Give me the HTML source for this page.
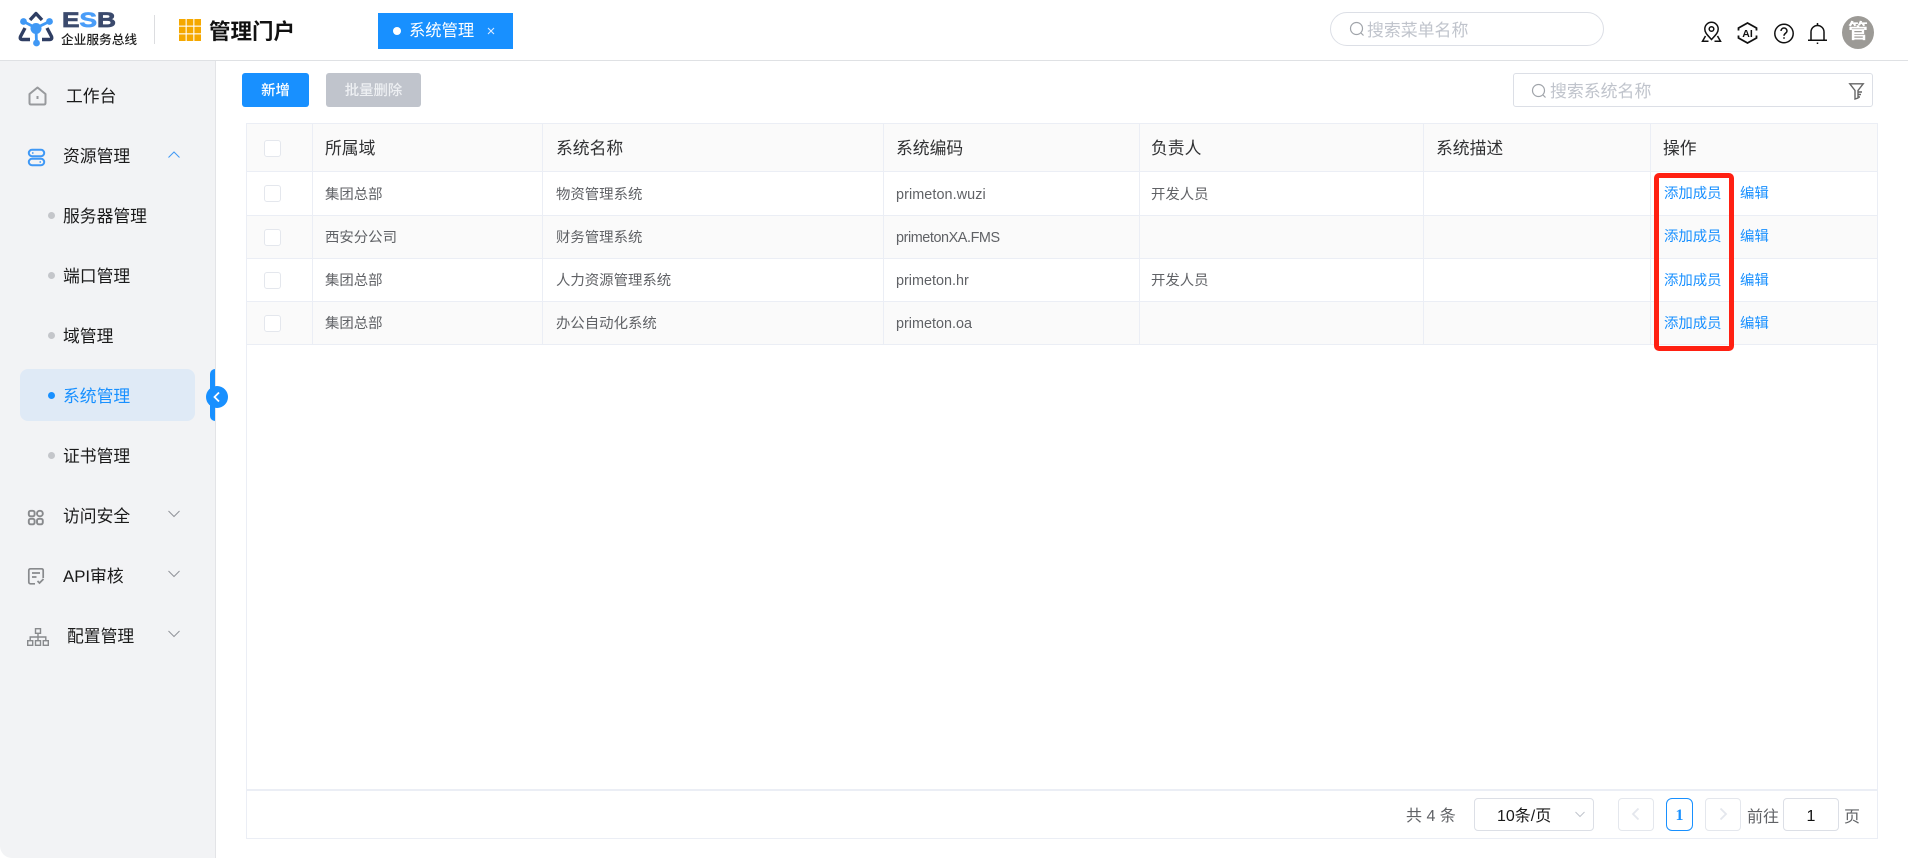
<!DOCTYPE html>
<html lang="zh-CN">
<head>
<meta charset="utf-8">
<title>系统管理</title>
<style>
*{box-sizing:border-box;margin:0;padding:0}
html,body{width:1908px;height:858px;overflow:hidden;background:#fff}
body{font-family:"Liberation Sans","Noto Sans CJK SC",sans-serif;position:relative}
#app{position:absolute;left:0;top:0;width:1908px;height:858px;border-radius:12px;overflow:hidden;background:#fff}
.a{position:absolute}
.t{position:absolute;white-space:nowrap;line-height:24px;height:24px;margin-top:1px}
.side{font-size:16.8px;color:#1a1a1a}
.h{font-size:16.8px;color:#303133}
.c{font-size:14.4px;color:#606266}
.l{font-size:14.4px;color:#1890ff}
.hl{position:absolute;height:1px;background:#ebeef5;left:246px;width:1632px}
.vl{position:absolute;width:1px;background:#ebeef5;top:123px;height:221px}
.cb{position:absolute;left:264px;width:17px;height:17px;border:1px solid #e4e7ed;border-radius:3px;background:#fff}
.dot{position:absolute;left:48px;width:7px;height:7px;border-radius:50%;background:#c4c6ca}
.pg{position:absolute;top:798px;height:33px;border:1px solid #e4e7ed;border-radius:4px;background:#fff}
svg{position:absolute;overflow:visible}
</style>
</head>
<body>
<div id="app">
  <!-- header -->
  <div class="a" style="left:0;top:60px;width:1908px;height:1px;background:#dfe1e4"></div>
  <svg style="left:0;top:0" width="160" height="60" viewBox="0 0 160 60">
    <g fill="none" stroke="#2f3e63" stroke-width="3.400" stroke-linejoin="round">
      <path d="M30 20L36 13.500L42 20"/>
      <path d="M25 28L20.500 36.500Q19.500 39.500 22.500 39.500H30"/>
      <path d="M47 28L51.500 36.500Q52.500 39.500 49.500 39.500H42"/>
    </g>
    <g stroke="#3f98f5" stroke-width="2.800">
      <line x1="23.500" y1="21.500" x2="36" y2="28"/>
      <line x1="49.500" y1="21.500" x2="36" y2="28"/>
      <line x1="36" y1="28" x2="36.500" y2="43"/>
    </g>
    <g fill="#3f98f5">
      <circle cx="36" cy="28.500" r="5.500"/>
      <circle cx="23.500" cy="21.500" r="3.400"/>
      <circle cx="49.500" cy="21.500" r="3.400"/>
      <circle cx="36.500" cy="43" r="3.400"/>
    </g>
    <text x="62" y="27" font-family="Liberation Sans" font-weight="700" font-size="21" textLength="54" lengthAdjust="spacingAndGlyphs" fill="#3b4a6d" stroke="#3b4a6d" stroke-width=".7">E<tspan fill="#4a9df8" stroke="#4a9df8">S</tspan>B</text>
  </svg>
  <div class="t" style="left:61px;top:27px;font-size:12.700px;font-weight:500;color:#222">企业服务总线</div>
  <div class="a" style="left:154px;top:15px;width:1px;height:29px;background:#dcdde0"></div>
  <svg style="left:179px;top:19px" width="22" height="22" viewBox="0 0 22 22">
    <g fill="#f5a800">
      <rect x="0" y="0" width="6.600" height="6.600"/><rect x="7.700" y="0" width="6.600" height="6.600"/><rect x="15.400" y="0" width="6.600" height="6.600"/>
      <rect x="0" y="7.700" width="6.600" height="6.600"/><rect x="7.700" y="7.700" width="6.600" height="6.600"/><rect x="15.400" y="7.700" width="6.600" height="6.600"/>
      <rect x="0" y="15.400" width="6.600" height="6.600"/><rect x="7.700" y="15.400" width="6.600" height="6.600"/><rect x="15.400" y="15.400" width="6.600" height="6.600"/>
    </g>
  </svg>
  <div class="t" style="left:209px;top:19px;font-size:21.500px;font-weight:700;color:#111">管理门户</div>
  <div class="a" style="left:378px;top:13px;width:135px;height:36px;background:#1890ff"></div>
  <div class="a" style="left:393px;top:27px;width:8px;height:8px;border-radius:50%;background:#fff"></div>
  <div class="t" style="left:409px;top:18px;font-size:16.300px;color:#fff">系统管理</div>
  <svg style="left:487px;top:27px" width="8" height="8" viewBox="0 0 8 8"><path d="M1 1L7 7M7 1L1 7" stroke="#dcebff" stroke-width="1.100"/></svg>

  <div class="a" style="left:1330px;top:12px;width:274px;height:34px;border:1px solid #dcdfe6;border-radius:17px"></div>
  <svg style="left:1349px;top:21px" width="16" height="16" viewBox="0 0 16 16" fill="none" stroke="#a0a4aa" stroke-width="1.200"><circle cx="7.500" cy="7.500" r="6"/><path d="M12 12L14.500 14.500"/></svg>
  <div class="t" style="left:1367px;top:18px;font-size:16.900px;color:#c0c4cc">搜索菜单名称</div>

  <!-- right icons -->
  <svg style="left:1700px;top:20px" width="130" height="28" viewBox="1700 20 130 28" fill="none" stroke="#111" stroke-width="1.500">
    <path d="M1711.500 39.500C1708 35.500 1704.800 33 1704.800 29A6.700 6.700 0 0 1 1718.200 29C1718.200 33 1715 35.500 1711.500 39.500Z"/>
    <circle cx="1711.500" cy="29" r="2.300"/>
    <path d="M1705.500 36L1702.500 41.300H1708.500M1717.500 36L1720.500 41.300H1714.500"/>
    <path d="M1738.500 30.500V28L1747.500 23L1756.500 28V30.500M1738.500 35.500V38L1747.500 43L1756.500 38V35.500" stroke-width="1.800"/>
    <circle cx="1784" cy="33.500" r="9.200"/>
    <path d="M1781 31A3 3 0 0 1 1787 31C1787 33.200 1784 33.300 1784 35.700"/>
    <path d="M1784 37.300V38.800"/>
    <path d="M1811 40V32A6.500 6.500 0 0 1 1824 32V40"/>
    <path d="M1808 40.300H1827"/>
    <path d="M1817.500 23V25.500M1817.500 42.500V44"/>
    <text x="1747.500" y="37" font-family="Liberation Sans" font-weight="700" font-size="10.500" fill="#111" stroke="none" text-anchor="middle">AI</text>
  </svg>
  <div class="a" style="left:1842px;top:16px;width:32px;height:33px;border-radius:50%;background:#9c9a96;overflow:hidden;color:#fff;font-size:20px;font-weight:700;line-height:33px;text-align:center">管</div>

  <!-- sidebar -->
  <div class="a" style="left:0;top:61px;width:215px;height:797px;background:#f2f3f5"></div>
  <div class="a" style="left:215px;top:61px;width:1px;height:797px;background:#e3e4e7"></div>
  <div class="a" style="left:20px;top:369px;width:175px;height:52px;border-radius:8px;background:#dfeaf6"></div>
  <div class="a" style="left:210px;top:369px;width:5px;height:52px;border-radius:5px 0 0 5px;background:#1890ff"></div>
  <div class="a" style="left:206px;top:386px;width:22px;height:22px;border-radius:50%;background:#1890ff"></div>
  <svg style="left:206px;top:386px" width="22" height="22" viewBox="0 0 22 22" fill="none"><path d="M13 6.500L8.500 11L13 15.500" stroke="#fff" stroke-width="1.800"/></svg>

  <svg style="left:28px;top:86px" width="20" height="20" viewBox="0 0 20 20" fill="none" stroke="#989a9d" stroke-width="2" stroke-linejoin="round">
    <path d="M1.500 8L9.500 1.500L17.500 8V17Q17.500 18.500 16 18.500H3Q1.500 18.500 1.500 17Z"/><path d="M9.500 10V13"/>
  </svg>
  <svg style="left:28px;top:149px" width="17" height="17" viewBox="0 0 17 17" fill="none" stroke="#3f98f5" stroke-width="2">
    <rect x=".8" y=".8" width="15.400" height="6.400" rx="3.200"/><rect x=".8" y="9.800" width="15.400" height="6.400" rx="3.200"/>
    <path d="M4 4H5.500M11.500 13H13" stroke-width="1.400"/>
  </svg>
  <svg style="left:28px;top:510px" width="16" height="15" viewBox="0 0 16 15" fill="none" stroke="#888a8d" stroke-width="1.900">
    <rect x=".8" y=".8" width="5.800" height="5.500" rx="1.800"/><rect x="9" y=".8" width="5.800" height="5.500" rx="2.700"/>
    <rect x=".8" y="8.800" width="5.800" height="5.500" rx="1.800"/><rect x="9" y="8.800" width="5.800" height="5.500" rx="1.800"/>
  </svg>
  <svg style="left:28px;top:568px" width="17" height="17" viewBox="0 0 17 17" fill="none" stroke="#888a8d" stroke-width="1.700">
    <path d="M7 15.800H2.500Q.8 15.800 .8 14V2.500Q.8 .8 2.500 .8H13.500Q15.200 .8 15.200 2.500V10"/><path d="M4 5H12M4 9H8.500M9.500 13L11.500 15L15.500 11"/>
  </svg>
  <svg style="left:27px;top:628px" width="22" height="18" viewBox="0 0 22 18" fill="none" stroke="#888a8d" stroke-width="1.400">
    <rect x="8.500" y=".7" width="5" height="4.600"/><rect x=".7" y="12.700" width="5" height="4.600"/><rect x="8.500" y="12.700" width="5" height="4.600"/><rect x="16.300" y="12.700" width="5" height="4.600"/>
    <path d="M11 5.300V12.700M3.200 12.700V9H18.800V12.700"/>
  </svg>

  <div class="t side" style="left:66px;top:84px">工作台</div>
  <div class="t side" style="left:63px;top:144px">资源管理</div>
  <div class="t side" style="left:63px;top:204px">服务器管理</div>
  <div class="t side" style="left:63px;top:264px">端口管理</div>
  <div class="t side" style="left:63px;top:324px">域管理</div>
  <div class="t side" style="left:63px;top:384px;color:#1890ff">系统管理</div>
  <div class="t side" style="left:63px;top:444px">证书管理</div>
  <div class="t side" style="left:63px;top:504px">访问安全</div>
  <div class="t side" style="left:63px;top:564px">API审核</div>
  <div class="t side" style="left:67px;top:624px">配置管理</div>
  <div class="dot" style="top:212px"></div>
  <div class="dot" style="top:272px"></div>
  <div class="dot" style="top:332px"></div>
  <div class="dot" style="top:392px;background:#1890ff"></div>
  <div class="dot" style="top:452px"></div>
  <svg style="left:168px;top:151px" width="12" height="8" viewBox="0 0 12 8" fill="none"><path d="M.5 6.500L6 1L11.500 6.500" stroke="#3f98f5" stroke-width="1"/></svg>
  <svg style="left:168px;top:510px" width="12" height="8" viewBox="0 0 12 8" fill="none"><path d="M.5 1L6 6.500L11.500 1" stroke="#909399" stroke-width="1"/></svg>
  <svg style="left:168px;top:570px" width="12" height="8" viewBox="0 0 12 8" fill="none"><path d="M.5 1L6 6.500L11.500 1" stroke="#909399" stroke-width="1"/></svg>
  <svg style="left:168px;top:630px" width="12" height="8" viewBox="0 0 12 8" fill="none"><path d="M.5 1L6 6.500L11.500 1" stroke="#909399" stroke-width="1"/></svg>

  <!-- toolbar -->
  <div class="a" style="left:242px;top:73px;width:67px;height:34px;border-radius:3px;background:#1890ff;color:#fff;font-size:14.400px;font-weight:500;line-height:36px;text-align:center">新增</div>
  <div class="a" style="left:326px;top:73px;width:95px;height:34px;border-radius:3px;background:#c0c4cc;color:#eef0f3;font-size:14.400px;font-weight:500;line-height:36px;text-align:center">批量删除</div>
  <div class="a" style="left:1513px;top:73px;width:360px;height:34px;border:1px solid #dcdfe6;border-radius:3px"></div>
  <svg style="left:1531px;top:83px" width="16" height="16" viewBox="0 0 16 16" fill="none" stroke="#a0a4aa" stroke-width="1.200"><circle cx="7.500" cy="7.500" r="6"/><path d="M12 12L14.500 14.500"/></svg>
  <div class="t" style="left:1550px;top:79px;font-size:16.900px;color:#c0c4cc">搜索系统名称</div>
  <svg style="left:1849px;top:83px" width="15" height="17" viewBox="0 0 15 17" fill="none" stroke="#666" stroke-width="1.400"><path d="M.8 .8H14.200L9 7.500V15L6 16V7.500Z"/><path d="M9.500 9H13M9.500 11.500H12M9.500 14H11"/></svg>

  <!-- table -->
  <div class="a" style="left:246px;top:123px;width:1632px;height:48px;background:#fafafa"></div>
  <div class="a" style="left:246px;top:215px;width:1632px;height:43px;background:#fafafa"></div>
  <div class="a" style="left:246px;top:301px;width:1632px;height:43px;background:#fafafa"></div>
  <div class="hl" style="top:123px"></div>
  <div class="hl" style="top:171px"></div>
  <div class="hl" style="top:215px"></div>
  <div class="hl" style="top:258px"></div>
  <div class="hl" style="top:301px"></div>
  <div class="hl" style="top:344px"></div>
  <div class="hl" style="top:789px;height:2px"></div>
  <div class="hl" style="top:838px"></div>
  <div class="a" style="left:246px;top:123px;width:1px;height:716px;background:#ebeef5"></div>
  <div class="a" style="left:1877px;top:123px;width:1px;height:716px;background:#ebeef5"></div>
  <div class="vl" style="left:312px"></div>
  <div class="vl" style="left:542px"></div>
  <div class="vl" style="left:883px"></div>
  <div class="vl" style="left:1139px"></div>
  <div class="vl" style="left:1423px"></div>
  <div class="vl" style="left:1650px"></div>

  <div class="cb" style="top:140px"></div>
  <div class="cb" style="top:185px"></div>
  <div class="cb" style="top:229px"></div>
  <div class="cb" style="top:272px"></div>
  <div class="cb" style="top:315px"></div>

  <div class="t h" style="left:325px;top:136px">所属域</div>
  <div class="t h" style="left:556px;top:136px">系统名称</div>
  <div class="t h" style="left:896px;top:136px">系统编码</div>
  <div class="t h" style="left:1151px;top:136px">负责人</div>
  <div class="t h" style="left:1436px;top:136px">系统描述</div>
  <div class="t h" style="left:1663px;top:136px">操作</div>

  <div class="t c" style="left:325px;top:182px">集团总部</div>
  <div class="t c" style="left:556px;top:182px">物资管理系统</div>
  <div class="t c" style="left:896px;top:182px;letter-spacing:.08px">primeton.wuzi</div>
  <div class="t c" style="left:1151px;top:182px">开发人员</div>
  <div class="t l" style="left:1664px;top:181px">添加成员</div>
  <div class="t l" style="left:1740px;top:181px">编辑</div>

  <div class="t c" style="left:325px;top:225px">西安分公司</div>
  <div class="t c" style="left:556px;top:225px">财务管理系统</div>
  <div class="t c" style="left:896px;top:225px;letter-spacing:-.42px">primetonXA.FMS</div>
  <div class="t l" style="left:1664px;top:224px">添加成员</div>
  <div class="t l" style="left:1740px;top:224px">编辑</div>

  <div class="t c" style="left:325px;top:268px">集团总部</div>
  <div class="t c" style="left:556px;top:268px">人力资源管理系统</div>
  <div class="t c" style="left:896px;top:268px">primeton.hr</div>
  <div class="t c" style="left:1151px;top:268px">开发人员</div>
  <div class="t l" style="left:1664px;top:268px">添加成员</div>
  <div class="t l" style="left:1740px;top:268px">编辑</div>

  <div class="t c" style="left:325px;top:311px">集团总部</div>
  <div class="t c" style="left:556px;top:311px">办公自动化系统</div>
  <div class="t c" style="left:896px;top:311px">primeton.oa</div>
  <div class="t l" style="left:1664px;top:311px">添加成员</div>
  <div class="t l" style="left:1740px;top:311px">编辑</div>

  <div class="a" style="left:1654px;top:173px;width:80px;height:178px;border:5px solid #ff2012;border-radius:5px"></div>

  <!-- pagination -->
  <div class="t" style="left:1406px;top:804px;font-size:16px;color:#606266">共 4 条</div>
  <div class="pg" style="left:1474px;width:120px;border-color:#dcdfe6"></div>
  <div class="t" style="left:1497px;top:804px;font-size:16px;color:#1a1a1a">10条/页</div>
  <svg style="left:1575px;top:811px" width="10" height="7" viewBox="0 0 10 7" fill="none"><path d="M.5 1L5 5.500L9.500 1" stroke="#c0c4cc" stroke-width="1"/></svg>
  <div class="pg" style="left:1618px;width:36px"></div>
  <svg style="left:1631px;top:807px" width="10" height="14" viewBox="0 0 10 14" fill="none"><path d="M7.500 1.500L2 7L7.500 12.500" stroke="#e4e7ed" stroke-width="1.800"/></svg>
  <div class="pg" style="left:1666px;width:27px;border-color:#1890ff;border-radius:6px;color:#1890ff;font:700 16px/33px 'Liberation Serif',serif;text-align:center">1</div>
  <div class="pg" style="left:1705px;width:36px"></div>
  <svg style="left:1718px;top:807px" width="10" height="14" viewBox="0 0 10 14" fill="none"><path d="M2.500 1.500L8 7L2.500 12.500" stroke="#e4e7ed" stroke-width="1.800"/></svg>
  <div class="t" style="left:1747px;top:805px;font-size:16px;color:#606266">前往</div>
  <div class="pg" style="left:1783px;width:56px;border-color:#dcdfe6;color:#111;font-size:16px;line-height:36px;text-align:center">1</div>
  <div class="t" style="left:1844px;top:805px;font-size:16px;color:#606266">页</div>
</div>
</body>
</html>
